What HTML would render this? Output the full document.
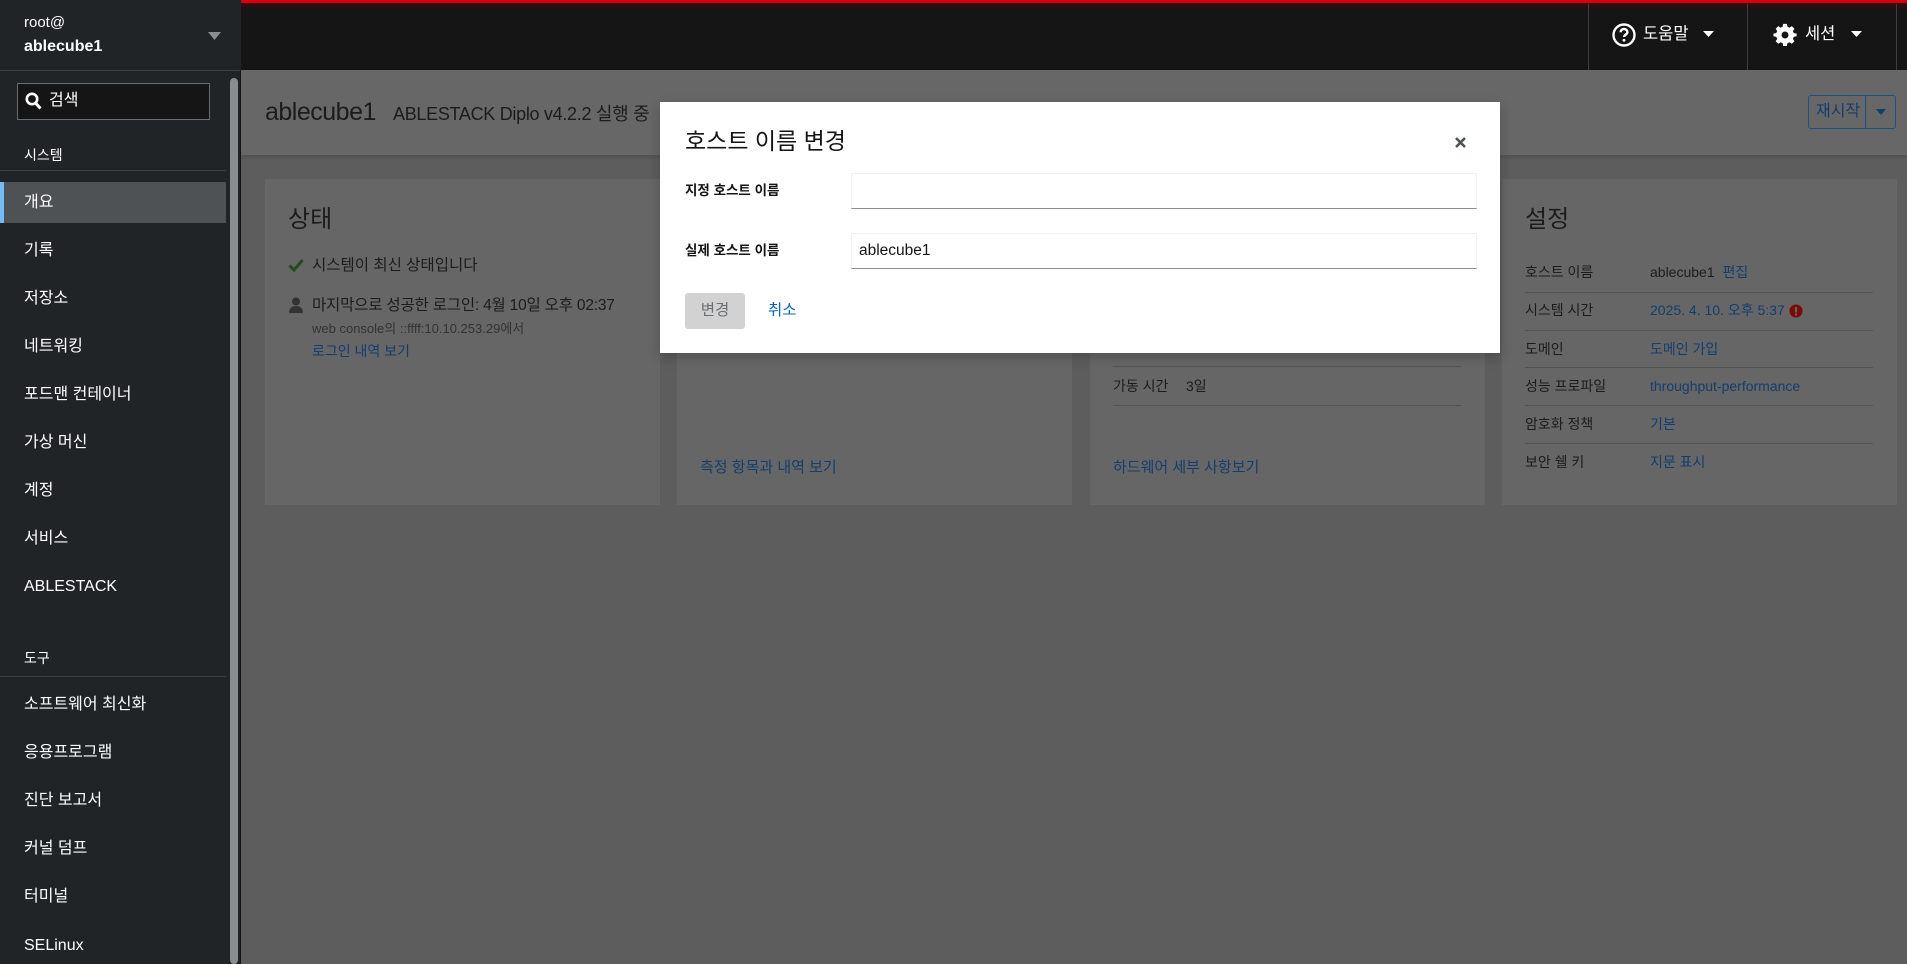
<!DOCTYPE html>
<html><head><meta charset="utf-8"><style>
*{margin:0;padding:0;box-sizing:border-box}
body{width:1907px;height:964px;overflow:hidden;background:#5d5d5d;font-family:"Liberation Sans","Noto Sans CJK KR",sans-serif;position:relative}
.a{position:absolute;white-space:nowrap}
.nav{position:absolute;left:24px;color:#fff;font-size:16px;line-height:20px;margin-top:1px}
.lbl{color:#1c1c1c;font-size:14px;line-height:18px;margin-top:1px}
.lnk{color:#123e6e}
.hr{position:absolute;height:1px;background:#535353}
</style></head><body>
<div class="a" style="left:0;top:0;width:1907px;height:70px;background:#151515"></div>
<div class="a" style="left:241px;top:0;width:1666px;height:3px;background:#d8000e"></div>
<div class="a" style="left:241px;top:3px;width:1666px;height:7px;background:linear-gradient(#3a0a0c,#151515)"></div>
<div class="a" style="left:1588px;top:4px;width:1px;height:66px;background:#3c3f42"></div>
<div class="a" style="left:1747px;top:4px;width:1px;height:66px;background:#3c3f42"></div>
<div class="a" style="left:1896px;top:4px;width:1px;height:66px;background:#3c3f42"></div>
<svg class="a" style="left:1612px;top:23px" width="24" height="24" viewBox="0 0 24 24"><circle cx="12" cy="12" r="10.5" fill="none" stroke="#fff" stroke-width="2.4"/><path d="M8.6 9.3a3.4 3.4 0 0 1 6.8 0c0 2.2-3.3 2.4-3.3 4.6" fill="none" stroke="#fff" stroke-width="2.4"/><circle cx="12" cy="17.3" r="1.4" fill="#fff"/></svg>
<div class="a" style="left:1643px;top:23px;color:#fff;font-size:16.5px;line-height:22px">도움말</div>
<svg class="a" style="left:1703px;top:31px" width="11" height="7"><path d="M0 0h11L5.5 6z" fill="#fff"/></svg>
<svg class="a" style="left:1773px;top:23px" width="24" height="24" viewBox="0 0 24 24"><path fill="#fff" d="M10 1h4l.6 3 2.2 1.1 2.6-1.7 2.8 2.8-1.7 2.6L21.6 11l3 .6v2.8l-3 .6-1.1 2.2 1.7 2.6-2.8 2.8-2.6-1.7-2.2 1.1-.6 3h-4l-.6-3-2.2-1.1-2.6 1.7-2.8-2.8 1.7-2.6L2.4 15l-3-.6v-2.8l3-.6 1.1-2.2-1.7-2.6 2.8-2.8 2.6 1.7L9.4 4z" transform="translate(1 0) scale(.92)"/><circle cx="12" cy="12" r="3.5" fill="#151515"/></svg>
<div class="a" style="left:1805px;top:23px;color:#fff;font-size:16.5px;line-height:22px">세션</div>
<svg class="a" style="left:1851px;top:31px" width="11" height="7"><path d="M0 0h11L5.5 6z" fill="#fff"/></svg>
<div class="a" style="left:0;top:0;width:241px;height:964px;background:#212427"></div>
<div class="a" style="left:0;top:70px;width:241px;height:1px;background:#3c3f42"></div>
<div class="a" style="left:24px;top:14px;color:#fff;font-size:15px;line-height:18px">root@</div>
<div class="a" style="left:24px;top:37px;color:#fff;font-size:16px;font-weight:bold;line-height:20px">ablecube1</div>
<svg class="a" style="left:208px;top:32px" width="13" height="8"><path d="M0 0h13L6.5 8z" fill="#8a8d90"/></svg>
<div class="a" style="left:17px;top:83px;width:193px;height:37px;border:1px solid #6a6e73;background:#151515"></div>
<svg class="a" style="left:25px;top:92px" width="17" height="18" viewBox="0 0 17 18"><circle cx="7" cy="7" r="5.2" fill="none" stroke="#fff" stroke-width="2.6"/><path d="M10.5 11l5 5.5" stroke="#fff" stroke-width="3"/></svg>
<div class="a" style="left:49px;top:91px;color:#fff;font-size:16px;line-height:20px">검색</div>
<div class="nav" style="top:144px;font-size:14px">시스템</div>
<div class="a" style="left:0;top:170px;width:226px;height:1px;background:#3c3f42"></div>
<div class="a" style="left:0;top:182px;width:226px;height:41px;background:#4f5255"></div>
<div class="a" style="left:0;top:182px;width:4px;height:41px;background:#73bcf7"></div>
<div class="nav" style="top:192px">개요</div>
<div class="nav" style="top:240px">기록</div>
<div class="nav" style="top:288px">저장소</div>
<div class="nav" style="top:336px">네트워킹</div>
<div class="nav" style="top:384px">포드맨 컨테이너</div>
<div class="nav" style="top:432px">가상 머신</div>
<div class="nav" style="top:480px">계정</div>
<div class="nav" style="top:528px">서비스</div>
<div class="nav" style="top:576px">ABLESTACK</div>
<div class="nav" style="top:647px;font-size:14px">도구</div>
<div class="a" style="left:0;top:676px;width:226px;height:1px;background:#3c3f42"></div>
<div class="nav" style="top:694px">소프트웨어 최신화</div>
<div class="nav" style="top:742px">응용프로그램</div>
<div class="nav" style="top:790px">진단 보고서</div>
<div class="nav" style="top:838px">커널 덤프</div>
<div class="nav" style="top:886px">터미널</div>
<div class="nav" style="top:935px">SELinux</div>
<div class="a" style="left:230px;top:78px;width:8px;height:886px;border-radius:4px;background:#8a8d90"></div>
<div class="a" style="left:240px;top:70px;width:1px;height:894px;background:#151515"></div>
<div class="a" style="left:241px;top:70px;width:1666px;height:85px;background:#676767;box-shadow:0 2px 4px rgba(0,0,0,.15)"></div>
<div class="a" style="left:265px;top:96px;color:#1c1c1c;font-size:25px;line-height:32px;letter-spacing:-0.5px">ablecube1</div>
<div class="a" style="left:393px;top:102px;color:#1c1c1c;font-size:18px;line-height:24px;letter-spacing:-0.3px">ABLESTACK Diplo v4.2.2 실행 중</div>
<div class="a" style="left:1808px;top:95px;width:88px;height:34px;border:1px solid #1b4f87;border-radius:3px"></div>
<div class="a" style="left:1865px;top:95px;width:1px;height:34px;background:#1b4f87"></div>
<div class="a" style="left:1816px;top:101px;color:#123e6e;font-size:16px;line-height:22px">재시작</div>
<svg class="a" style="left:1876px;top:109px" width="10" height="6"><path d="M0 0h10L5 6z" fill="#123e6e"/></svg>
<div class="a" style="left:265px;top:179px;width:395px;height:326px;background:#666"></div>
<div class="a" style="left:677px;top:179px;width:395px;height:326px;background:#666"></div>
<div class="a" style="left:1090px;top:179px;width:395px;height:326px;background:#666"></div>
<div class="a" style="left:1502px;top:179px;width:395px;height:326px;background:#666"></div>
<div class="a" style="left:288px;top:205px;color:#1c1c1c;font-size:24px;line-height:30px">상태</div>
<svg class="a" style="left:288px;top:258px" width="16" height="14"><path d="M1.5 7.5l4.5 4.5L14.5 2" fill="none" stroke="#1e4f18" stroke-width="3"/></svg>
<div class="a lbl" style="left:312px;top:255px;font-size:15.5px;line-height:20px">시스템이 최신 상태입니다</div>
<svg class="a" style="left:289px;top:297px" width="14" height="16"><circle cx="7" cy="4.5" r="4" fill="#333"/><path d="M0 16c0-5 3-7 7-7s7 2 7 7z" fill="#333"/></svg>
<div class="a lbl" style="left:312px;top:295px;font-size:15.5px;line-height:20px;letter-spacing:-0.2px">마지막으로 성공한 로그인: 4월 10일 오후 02:37</div>
<div class="a" style="left:312px;top:321px;color:#333;font-size:13px;line-height:16px">web console의 ::ffff:10.10.253.29에서</div>
<div class="a lnk" style="left:312px;top:343px;font-size:14px;line-height:17px">로그인 내역 보기</div>
<div class="a lnk" style="left:700px;top:458px;font-size:15px;line-height:20px">측정 항목과 내역 보기</div>
<div class="hr" style="left:1113px;top:366px;width:348px"></div>
<div class="a lbl" style="left:1113px;top:376px">가동 시간</div>
<div class="a lbl" style="left:1186px;top:376px">3일</div>
<div class="hr" style="left:1113px;top:405px;width:348px"></div>
<div class="a lnk" style="left:1113px;top:458px;font-size:15px;line-height:20px">하드웨어 세부 사항보기</div>
<div class="a" style="left:1525px;top:205px;color:#1c1c1c;font-size:24px;line-height:30px">설정</div>
<div class="a lbl" style="left:1525px;top:262px">호스트 이름</div><div class="a lbl" style="left:1650px;top:262px">ablecube1 <span class="lnk" style="margin-left:4px">편집</span></div>
<div class="hr" style="left:1525px;top:292px;width:348px"></div>
<div class="a lbl" style="left:1525px;top:300px">시스템 시간</div><div class="a lbl lnk" style="left:1650px;top:300px">2025. 4. 10. 오후 5:37</div>
<svg class="a" style="left:1789px;top:304px" width="14" height="14"><circle cx="7" cy="7" r="6.5" fill="#7a0b08"/><rect x="6" y="3" width="2" height="5.5" fill="#666"/><rect x="6" y="9.5" width="2" height="2" fill="#666"/></svg>
<div class="hr" style="left:1525px;top:330px;width:348px"></div>
<div class="a lbl" style="left:1525px;top:339px">도메인</div><div class="a lbl lnk" style="left:1650px;top:339px">도메인 가입</div>
<div class="hr" style="left:1525px;top:367px;width:348px"></div>
<div class="a lbl" style="left:1525px;top:376px">성능 프로파일</div><div class="a lbl lnk" style="left:1650px;top:376px">throughput-performance</div>
<div class="hr" style="left:1525px;top:405px;width:348px"></div>
<div class="a lbl" style="left:1525px;top:414px">암호화 정책</div><div class="a lbl lnk" style="left:1650px;top:414px">기본</div>
<div class="hr" style="left:1525px;top:443px;width:348px"></div>
<div class="a lbl" style="left:1525px;top:452px">보안 쉘 키</div><div class="a lbl lnk" style="left:1650px;top:452px">지문 표시</div>
<div class="a" style="left:660px;top:102px;width:840px;height:251px;background:#fff;box-shadow:0 4px 12px rgba(0,0,0,.2)"></div>
<div class="a" style="left:685px;top:126px;color:#151515;font-size:23px;line-height:30px">호스트 이름 변경</div>
<svg class="a" style="left:1455px;top:137px" width="11" height="11"><path d="M1 1l9 9M10 1l-9 9" stroke="#4f5255" stroke-width="2.6"/></svg>
<div class="a" style="left:685px;top:182px;color:#151515;font-size:13.5px;font-weight:bold;line-height:18px">지정 호스트 이름</div>
<div class="a" style="left:685px;top:242px;color:#151515;font-size:13.5px;font-weight:bold;line-height:18px">실제 호스트 이름</div>
<div class="a" style="left:851px;top:173px;width:626px;height:36px;border:1px solid #f0f0f0;border-bottom:1px solid #8a8d90"></div>
<div class="a" style="left:851px;top:233px;width:626px;height:36px;border:1px solid #f0f0f0;border-bottom:1px solid #8a8d90"></div>
<div class="a" style="left:859px;top:241px;color:#151515;font-size:15.5px;line-height:20px">ablecube1</div>
<div class="a" style="left:685px;top:293px;width:60px;height:36px;background:#d2d2d2;border-radius:3px;color:#6a6e73;font-size:15.5px;line-height:36px;text-align:center">변경</div>
<div class="a" style="left:768px;top:301px;color:#0066cc;font-size:15.5px;line-height:20px">취소</div>
</body></html>
